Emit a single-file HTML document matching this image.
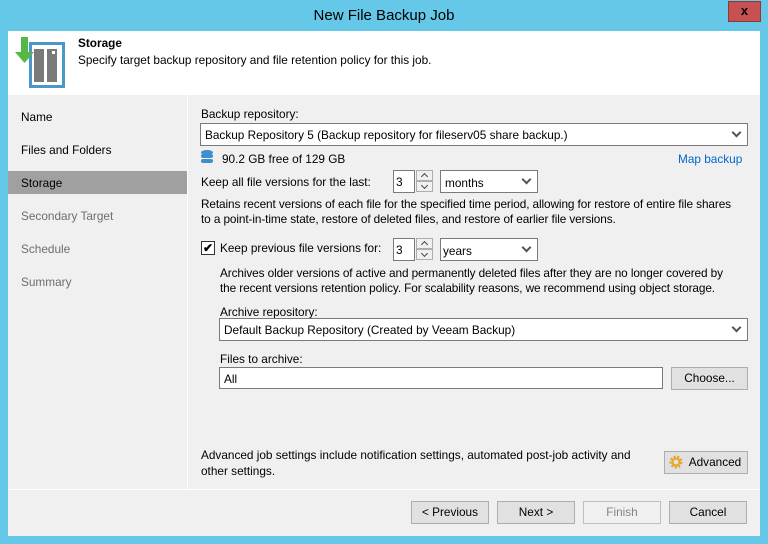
<!DOCTYPE html>
<html><head><style>
*{margin:0;padding:0;box-sizing:border-box}
body{width:768px;height:544px;background:#65c8e8;font-family:"Liberation Sans",sans-serif;font-size:11.8px;color:#000;position:relative;overflow:hidden}
.a{position:absolute;white-space:nowrap}
.box{position:absolute;background:#fff;border:1px solid #7a7a7a}
.dd::after{content:"";position:absolute;right:7px;top:5px;width:5px;height:5px;border-right:2px solid #555;border-bottom:2px solid #555;transform:rotate(45deg)}
.btn{position:absolute;background:#e1e1e1;border:1px solid #adadad;text-align:center;line-height:20px}
.spin{position:absolute;width:17px;background:#f0f0f0;border:1px solid #adadad}
.spin::after{content:"";position:absolute;left:5px;width:4px;height:4px;border-left:1.5px solid #444;border-top:1.5px solid #444}
.up::after{top:3px;transform:rotate(45deg)}
.dn::after{top:1px;transform:rotate(225deg)}
.g{color:#6d6d6d}
</style></head><body>
<div class="a" style="left:0;top:7px;width:768px;text-align:center;font-size:15px;color:#000">New File Backup Job</div>
<div class="a" style="left:728px;top:1px;width:33px;height:21px;background:#c75050;border:1px solid #8a3a3a;color:#000;font-weight:bold;text-align:center;line-height:18px;font-size:13px">x</div>
<div class="a" style="left:8px;top:31px;width:752px;height:505px;background:#f0f0f0"></div>
<div class="a" style="left:8px;top:31px;width:752px;height:64px;background:#fff"></div>
<svg class="a" style="left:12px;top:36px" width="56" height="56">
<rect x="18.5" y="7.5" width="33" height="43" fill="none" stroke="#4b97c9" stroke-width="3"/>
<rect x="22" y="13" width="10" height="33" fill="#7a7a7a"/><rect x="35" y="13" width="10" height="33" fill="#7a7a7a"/>
<rect x="40" y="15" width="3" height="3" fill="#fff"/>
<path d="M9 1h7v15h6l-9.5 11L3 16h6z" fill="#54b848"/>
</svg>
<div class="a" style="left:78px;top:36px;font-weight:bold">Storage</div>
<div class="a" style="left:78px;top:53px">Specify target backup repository and file retention policy for this job.</div>
<div class="a" style="left:187px;top:95px;width:1px;height:394px;background:#fff"></div>
<div class="a" style="left:8px;top:489px;width:752px;height:1px;background:#fff"></div>
<div class="a" style="left:21px;top:110px">Name</div>
<div class="a" style="left:21px;top:143px">Files and Folders</div>
<div class="a" style="left:8px;top:171px;width:179px;height:23px;background:#a0a0a0"></div>
<div class="a" style="left:21px;top:176px">Storage</div>
<div class="a g" style="left:21px;top:209px">Secondary Target</div>
<div class="a g" style="left:21px;top:242px">Schedule</div>
<div class="a g" style="left:21px;top:275px">Summary</div>

<div class="a" style="left:201px;top:107px">Backup repository:</div>
<div class="box dd" style="left:200px;top:123px;width:548px;height:23px"><span class="a" style="left:4px;top:4px">Backup Repository 5 (Backup repository for fileserv05 share backup.)</span></div>
<svg class="a" style="left:201px;top:150px" width="12" height="14"><ellipse cx="6" cy="2.5" rx="6" ry="2.5" fill="#3d8fd0"/><rect y="4" width="12" height="4" rx="2" fill="#3d8fd0"/><rect y="9" width="12" height="4" rx="2" fill="#3d8fd0"/></svg>
<div class="a" style="left:222px;top:152px">90.2 GB free of 129 GB</div>
<div class="a" style="left:678px;top:152px;color:#0066cc">Map backup</div>
<div class="a" style="left:201px;top:175px">Keep all file versions for the last:</div>
<div class="box" style="left:393px;top:170px;width:22px;height:23px"><span class="a" style="left:2px;top:4px">3</span></div>
<div class="spin up" style="left:416px;top:170px;height:11px"></div><div class="spin dn" style="left:416px;top:181px;height:11px"></div>
<div class="box dd" style="left:440px;top:170px;width:98px;height:23px"><span class="a" style="left:4px;top:5px">months</span></div>
<div class="a" style="left:201px;top:197px;letter-spacing:-0.1px">Retains recent versions of each file for the specified time period, allowing for restore of entire file shares</div>
<div class="a" style="left:201px;top:212px;letter-spacing:-0.1px">to a point-in-time state, restore of deleted files, and restore of earlier file versions.</div>
<div class="a" style="left:201px;top:241px;width:14px;height:14px;border:1px solid #333;background:#fff;font-size:12px;line-height:12px;text-align:center;font-weight:bold">✔</div>
<div class="a" style="left:220px;top:241px">Keep previous file versions for:</div>
<div class="box" style="left:393px;top:238px;width:22px;height:23px"><span class="a" style="left:2px;top:4px">3</span></div>
<div class="spin up" style="left:416px;top:238px;height:11px"></div><div class="spin dn" style="left:416px;top:249px;height:11px"></div>
<div class="box dd" style="left:440px;top:238px;width:98px;height:23px"><span class="a" style="left:2px;top:5px">years</span></div>
<div class="a" style="left:220px;top:266px;letter-spacing:-0.1px">Archives older versions of active and permanently deleted files after they are no longer covered by</div>
<div class="a" style="left:220px;top:281px;letter-spacing:-0.1px">the recent versions retention policy. For scalability reasons, we recommend using object storage.</div>
<div class="a" style="left:220px;top:305px">Archive repository:</div>
<div class="box dd" style="left:219px;top:318px;width:529px;height:23px"><span class="a" style="left:4px;top:4px">Default Backup Repository (Created by Veeam Backup)</span></div>
<div class="a" style="left:220px;top:352px">Files to archive:</div>
<div class="box" style="left:219px;top:367px;width:444px;height:22px"><span class="a" style="left:4px;top:4px">All</span></div>
<div class="btn" style="left:671px;top:367px;width:77px;height:23px">Choose...</div>
<div class="a" style="left:201px;top:448px">Advanced job settings include notification settings, automated post-job activity and</div>
<div class="a" style="left:201px;top:464px">other settings.</div>
<div class="btn" style="left:664px;top:451px;width:84px;height:23px;padding-left:18px">Advanced</div>
<svg class="a" style="left:668px;top:454px" width="16" height="16"><circle cx="8" cy="8" r="5" fill="none" stroke="#e8a52a" stroke-width="3" stroke-dasharray="2 1.5"/><circle cx="8" cy="8" r="3.5" fill="none" stroke="#e8a52a" stroke-width="2"/></svg>
<div class="btn" style="left:411px;top:501px;width:78px;height:23px">&lt; Previous</div>
<div class="btn" style="left:497px;top:501px;width:78px;height:23px">Next &gt;</div>
<div class="btn" style="left:583px;top:501px;width:78px;height:23px;background:#f0f0f0;border-color:#bfbfbf;color:#838383">Finish</div>
<div class="btn" style="left:669px;top:501px;width:78px;height:23px">Cancel</div>
</body></html>
